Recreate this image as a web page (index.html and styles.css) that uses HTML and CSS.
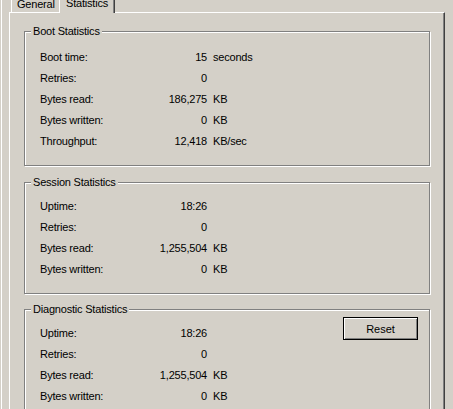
FILE: index.html
```html
<!DOCTYPE html>
<html>
<head>
<meta charset="utf-8">
<link rel="stylesheet" href="styles.css">
</head>
<body>
<div class="sheet">
  <div class="tabs">
    <div class="tab">General</div>
    <div class="tab active">Statistics</div>
  </div>
  <div class="panel">
    <fieldset class="group boot">
      <legend>Boot Statistics</legend>
      <div class="rows">
        <span class="label">Boot time:</span><span class="val">15</span><span class="unit">seconds</span>
        <span class="label">Retries:</span><span class="val">0</span><span class="unit"></span>
        <span class="label">Bytes read:</span><span class="val">186,275</span><span class="unit">KB</span>
        <span class="label">Bytes written:</span><span class="val">0</span><span class="unit">KB</span>
        <span class="label">Throughput:</span><span class="val">12,418</span><span class="unit">KB/sec</span>
      </div>
    </fieldset>
    <fieldset class="group session">
      <legend>Session Statistics</legend>
      <div class="rows">
        <span class="label">Uptime:</span><span class="val">18:26</span><span class="unit"></span>
        <span class="label">Retries:</span><span class="val">0</span><span class="unit"></span>
        <span class="label">Bytes read:</span><span class="val">1,255,504</span><span class="unit">KB</span>
        <span class="label">Bytes written:</span><span class="val">0</span><span class="unit">KB</span>
      </div>
    </fieldset>
    <fieldset class="group diag">
      <legend>Diagnostic Statistics</legend>
      <div class="diag-body">
        <div class="rows">
          <span class="label">Uptime:</span><span class="val">18:26</span><span class="unit"></span>
          <span class="label">Retries:</span><span class="val">0</span><span class="unit"></span>
          <span class="label">Bytes read:</span><span class="val">1,255,504</span><span class="unit">KB</span>
          <span class="label">Bytes written:</span><span class="val">0</span><span class="unit">KB</span>
        </div>
        <button class="btn" type="button">Reset</button>
      </div>
    </fieldset>
  </div>
</div>
</body>
</html>
```
FILE: styles.css
```css
* { box-sizing: border-box; }
html, body { margin: 0; height: 100%; }
body {
  background: #D4D0C8;
  color: #000;
  font-family: "Liberation Sans", Arial, sans-serif;
  font-size: 11px;
  letter-spacing: -0.2px;
  overflow: hidden;
}
.sheet {
  margin-left: 1px;
  border-left: 1px solid #fff;
  height: 100%;
}
.tabs {
  display: flex;
  align-items: flex-end;
  height: 12px;
  padding-left: 9px;
}
.tab {
  width: 50px;
  height: 16px;
  padding: 2px 0 0 5px;
  line-height: 13px;
  border-left: 1px solid #fff;
  border-right: 1px solid #404040;
  box-shadow: inset -1px 0 0 #808080;
  background: #D4D0C8;
  white-space: nowrap;
}
.tab.active {
  position: relative;
  z-index: 1;
  width: 56px;
  height: 18px;
  margin-left: -2px;
  margin-bottom: -1px;
  padding-left: 6px;
}
.panel {
  margin-left: 7px;
  width: 436px;
  height: 420px;
  border-top: 1px solid #fff;
  border-left: 1px solid #fff;
  border-right: 1px solid #404040;
  box-shadow: inset -1px 0 0 #808080;
  padding: 12px 14px 0 14px;
}
.group {
  margin: 0;
  padding: 0;
  min-width: 0;
  border: 1px solid #808080;
  box-shadow: inset 1px 1px 0 #fff, 1px 1px 0 #fff;
}
.group.boot { margin-bottom: 10px; }
.group.session { margin-bottom: 9px; }
.group legend {
  margin-left: 6px;
  padding: 0 2px;
  line-height: 13px;
  background: #D4D0C8;
}
.rows {
  display: grid;
  grid-template-columns: 100px 67px auto;
  grid-auto-rows: 21px;
  line-height: 21px;
  padding: 7px 0 13px 15px;
}
.boot .rows { padding-top: 9px; }
.val { text-align: right; }
.unit { padding-left: 6px; }
.diag-body {
  display: flex;
  align-items: flex-start;
}
.diag-body .rows { flex: 1; }
.btn {
  margin: 1px 11px 0 0;
  width: 75px;
  height: 23px;
  padding: 0;
  border: 1px solid #000;
  background: #D4D0C8;
  box-shadow: inset 1px 1px 0 #fff, inset -1px -1px 0 #808080;
  font: inherit;
  color: #000;
}
```
